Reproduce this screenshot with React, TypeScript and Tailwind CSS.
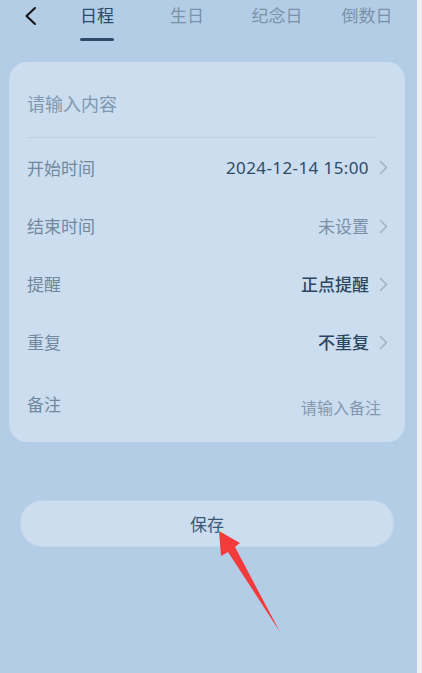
import React from "react";

const FONT = { fontFamily: '"Noto Sans CJK SC", "Noto Sans", sans-serif' };

function Chevron() {
  return (
    <svg width="9" height="15" viewBox="0 0 9 15" className="shrink-0">
      <path d="M1.5 1.5 L7.5 7.5 L1.5 13.5" fill="none" stroke="#a3b3c3" strokeWidth="1.6" strokeLinecap="round" strokeLinejoin="round" />
    </svg>
  );
}

type Row = { label: string; value: string; tone: "dark" | "bold" | "muted"; h: string };

const rows: Row[] = [
  { label: "开始时间", value: "2024-12-14 15:00", tone: "dark", h: "h-[59px]" },
  { label: "结束时间", value: "未设置", tone: "muted", h: "h-[58px]" },
  { label: "提醒", value: "正点提醒", tone: "bold", h: "h-[58px]" },
  { label: "重复", value: "不重复", tone: "bold", h: "h-[58px]" },
];

export default function App() {
  const tabs = ["日程", "生日", "纪念日", "倒数日"];

  return (
    <div className="flex w-[422px] h-[673px] overflow-hidden" style={FONT}>
      <div className="relative flex-1 bg-[#b3cde7]">
        {/* Header */}
        <div className="flex h-[50px]">
          <div className="w-[52px] pl-[24px] pt-[6px]">
            <svg width="14" height="20" viewBox="0 0 14 20">
              <path d="M11 2 L2.5 10 L11 18" fill="none" stroke="#111" strokeWidth="2" strokeLinecap="round" strokeLinejoin="round" />
            </svg>
          </div>
          {tabs.map((t, i) => (
            <div key={t} className="w-[90px] flex flex-col items-center pt-[4px]">
              <span className={`text-[17px] leading-[22px] ${i === 0 ? "text-[#2b4a68]" : "text-[#7b91a7]"}`}>{t}</span>
              {i === 0 && <div className="mt-[12px] h-[3px] w-[34px] rounded-full bg-[#2d4b68]" />}
            </div>
          ))}
        </div>

        {/* Card */}
        <div className="ml-[9px] mt-[12px] w-[396px] rounded-[18px] bg-[#cbddef] pb-[9px]">
          <div className="px-[18px]">
            <div className="pt-[30px] pb-[23px] text-[18px] leading-[22px] text-[#8098af]">请输入内容</div>
            <div className="h-px bg-[#bdd0e3] mr-[11px]" />
          </div>
          {rows.map((r) => (
            <div key={r.label} className={`flex ${r.h} items-center justify-between pl-[18px] pr-[17px]`}>
              <span className="text-[17px] text-[#7188a0]">{r.label}</span>
              <div className="flex items-center gap-[10px]">
                {r.tone === "dark" ? (
                  <span className="text-[17px] tracking-[0.4px] text-[#2e4b67]" style={{ fontFamily: '"Noto Sans", sans-serif' }}>
                    {r.value}
                  </span>
                ) : (
                  <span className={`text-[17px] ${r.tone === "bold" ? "text-[#2b4763] font-medium" : "text-[#7990a7]"}`}>
                    {r.value}
                  </span>
                )}
                <Chevron />
              </div>
            </div>
          ))}
          <div className="flex h-[62px] items-center justify-between pt-[3px] pl-[18px] pr-[24px]">
            <span className="text-[17px] text-[#7188a0]">备注</span>
            <span className="pt-[6px] text-[16px] text-[#8398ae]">请输入备注</span>
          </div>
        </div>

        {/* Save button */}
        <div className="ml-[20px] mt-[58px] flex h-[47px] w-[374px] items-center justify-center rounded-[22px] border border-[#c2d6ea] bg-[#cbddef]">
          <span className="text-[17px] text-[#3b5874]">保存</span>
        </div>

        {/* Annotation arrow */}
        <svg className="absolute left-0 top-0 pointer-events-none" width="417" height="673">
          <polygon points="219,531 240,543 235,547 280,632 228,552 221,556" fill="#f43b3b" />
        </svg>
      </div>
      <div className="w-[5px] bg-[#eeeff1]" />
    </div>
  );
}
